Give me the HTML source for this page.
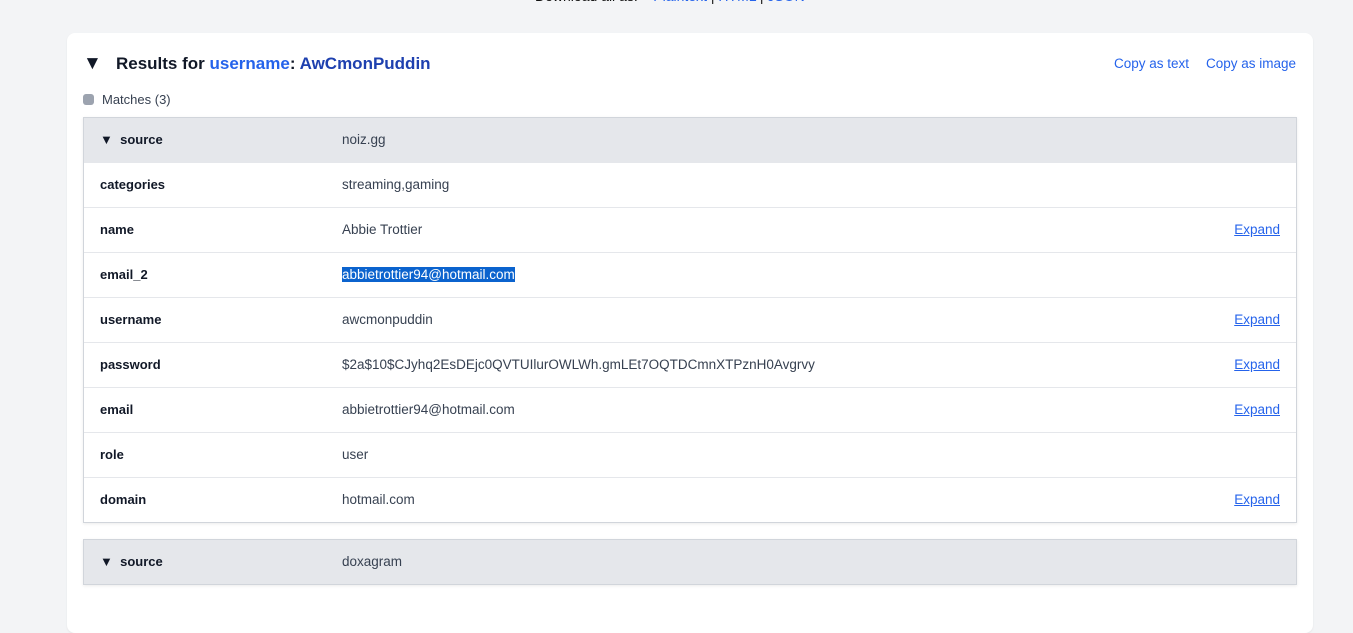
<!DOCTYPE html><html><head><style>
body{margin:0;background:#f3f4f6;font-family:"Liberation Sans",sans-serif;font-size:13.5px;color:#1f2937;width:1353px;height:586px;overflow:hidden;position:relative}
.top{position:absolute;top:-12px;left:535px;font-size:14px;color:#111}
.top a{color:#2563eb;text-decoration:none}
.card{position:absolute;left:67px;top:33px;width:1246px;height:600px;background:#fff;border-radius:8px;box-shadow:0 1px 2px rgba(0,0,0,.06)}
h2{position:absolute;left:16px;top:20px;margin:0;font-size:17px;font-weight:bold;color:#111827}
h2 .t{font-size:19px}
h2 .b1{color:#2563eb}h2 .b2{color:#1e40af}
.copy{position:absolute;top:23px;font-size:13.5px;color:#2563eb}
.m{position:absolute;left:16px;top:59px;color:#374151;font-size:13px}
.m i{display:inline-block;width:11px;height:11px;background:#9ca3af;border-radius:3px;vertical-align:-1px;margin-right:8px}
.tbl{position:absolute;left:16px;width:1212px;border:1px solid #d1d5db;box-shadow:0 1px 3px rgba(0,0,0,.08)}
.r{height:44px;border-top:1px solid #e5e7eb;position:relative;line-height:44px}
.r:first-child{border-top:0;height:44px}
.r.h{background:#e5e7eb}
.k{position:absolute;left:16px;font-weight:bold;font-size:13px;color:#111827}
.v{position:absolute;left:258px;font-size:13.5px;color:#374151}
.e{position:absolute;right:16px;color:#2563eb;text-decoration:underline}
.sel{background:#0b63ce;color:#fff}
</style></head><body>
<div class="top">Download all as: &nbsp;&nbsp; <a>Plaintext</a> | <a>HTML</a> | <a>JSON</a></div>
<div class="card">
<h2><span class="t">▼</span>&nbsp;&nbsp; Results for <span class="b1">username</span>: <span class="b2">AwCmonPuddin</span></h2>
<span class="copy" style="left:1047px">Copy as text</span><span class="copy" style="left:1139px">Copy as image</span>
<div class="m"><i></i>Matches (3)</div>
<div class="tbl" style="top:84px">
<div class="r h"><span class="k">▼&nbsp; source</span><span class="v">noiz.gg</span></div>
<div class="r"><span class="k">categories</span><span class="v">streaming,gaming</span></div>
<div class="r"><span class="k">name</span><span class="v">Abbie Trottier</span><span class="e">Expand</span></div>
<div class="r"><span class="k">email_2</span><span class="v"><span class="sel">abbietrottier94@hotmail.com</span></span></div>
<div class="r"><span class="k">username</span><span class="v">awcmonpuddin</span><span class="e">Expand</span></div>
<div class="r"><span class="k">password</span><span class="v">$2a$10$CJyhq2EsDEjc0QVTUIlurOWLWh.gmLEt7OQTDCmnXTPznH0Avgrvy</span><span class="e">Expand</span></div>
<div class="r"><span class="k">email</span><span class="v">abbietrottier94@hotmail.com</span><span class="e">Expand</span></div>
<div class="r"><span class="k">role</span><span class="v">user</span></div>
<div class="r"><span class="k">domain</span><span class="v">hotmail.com</span><span class="e">Expand</span></div>
</div>
<div class="tbl" style="top:506px">
<div class="r h"><span class="k">▼&nbsp; source</span><span class="v">doxagram</span></div>
</div>
</div>
</body></html>
